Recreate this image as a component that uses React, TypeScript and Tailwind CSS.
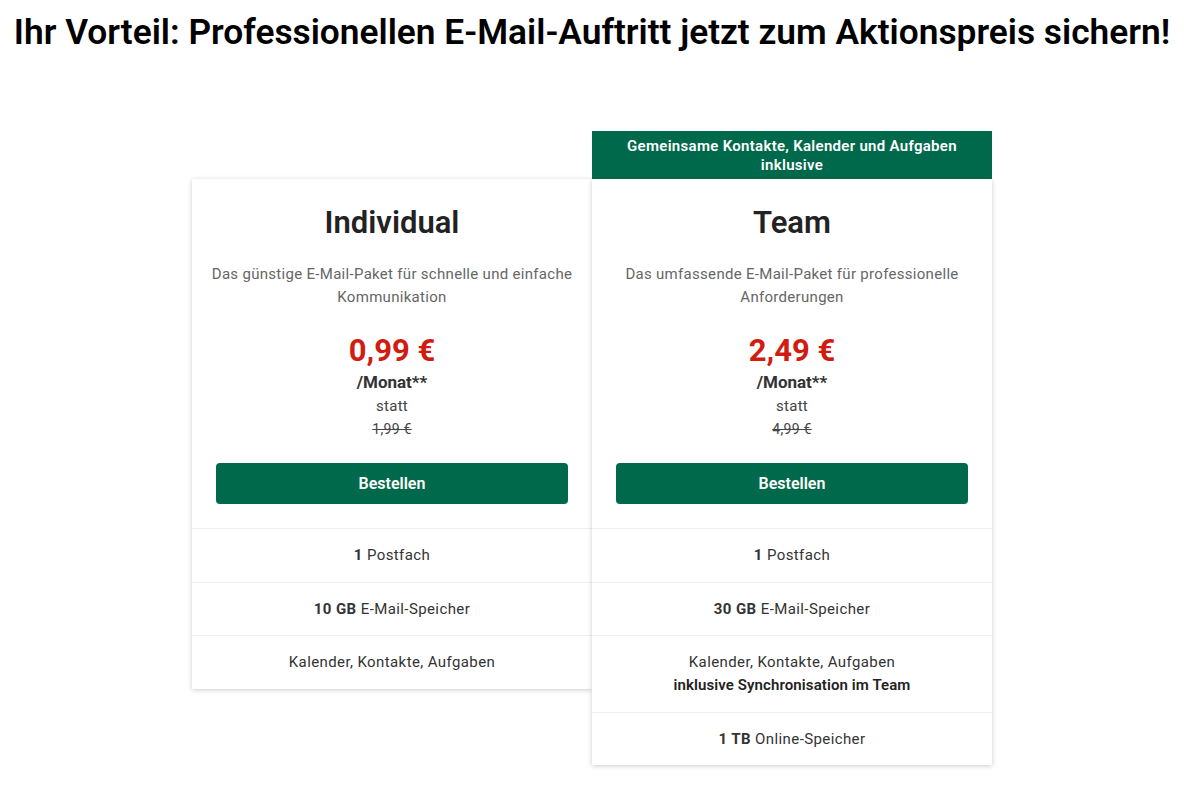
const plans = [
  {
    name: "Individual",
    banner: null as string | null,
    desc: "Das günstige E-Mail-Paket für schnelle und einfache Kommunikation",
    price: "0,99 €",
    old: "1,99 €",
    features: [
      { b: "1", t: "Postfach" },
      { b: "10 GB", t: "E-Mail-Speicher" },
      { b: "", t: "Kalender, Kontakte, Aufgaben" },
    ],
  },
  {
    name: "Team",
    banner: "Gemeinsame Kontakte, Kalender und Aufgaben inklusive",
    desc: "Das umfassende E-Mail-Paket für professionelle Anforderungen",
    price: "2,49 €",
    old: "4,99 €",
    features: [
      { b: "1", t: "Postfach" },
      { b: "30 GB", t: "E-Mail-Speicher" },
      { b: "", t: "Kalender, Kontakte, Aufgaben", extra: "inklusive Synchronisation im Team" },
      { b: "1 TB", t: "Online-Speicher" },
    ],
  },
];

const App = () => {
  return (
    <div className="min-h-screen bg-white font-['Roboto',sans-serif] text-[#222]">
      <h1 className="pt-[12px] text-center text-[35.3px] font-semibold leading-[40px] text-black">
        Ihr Vorteil: Professionellen E-Mail-Auftritt jetzt zum Aktionspreis sichern!
      </h1>

      <div className="mt-[79px] flex justify-center items-start">
        {plans.map((p) => (
          <div key={p.name} className="w-[400px] flex flex-col">
            {/* banner slot */}
            <div className="h-[48px]">
              {p.banner && (
                <div className="h-[48px] bg-[#00694b] px-6 pt-[6px] text-center text-[15px] font-semibold leading-[19px] tracking-[0.3px] text-white">
                  {p.banner}
                </div>
              )}
            </div>
            <div className="bg-white shadow-[0_1px_5px_rgba(0,0,0,0.2)]">
              <div className="px-6 pt-[25px] pb-6 text-center">
                <h2 className="text-[31px] font-semibold leading-[38px] text-[#222]">{p.name}</h2>
                <p className="-mx-[10px] mt-[21px] text-[15px] leading-[23px] tracking-[0.3px] text-[#666]">{p.desc}</p>
                <div className="mt-[24px] text-[31px] font-bold leading-[36px] text-[#cf1d12]">{p.price}</div>
                <div className="mt-[2px] text-[17px] font-bold leading-[22px] text-[#333]">/Monat**</div>
                <div className="mt-[2px] text-[15px] leading-[22px] tracking-[0.3px] text-[#444]">statt</div>
                <div className="text-[14px] leading-[24px] tracking-[0.3px] text-[#444] line-through">{p.old}</div>
                <button className="mt-[22px] h-[41px] w-full rounded-[4px] bg-[#00694b] text-[16px] font-semibold text-white">
                  Bestellen
                </button>
              </div>
              {p.features.map((f, i) => (
                <div
                  key={i}
                  className="border-t border-[#eeeeee] px-6 pt-[15px] pb-[14.5px] text-center text-[15px] leading-[23px] tracking-[0.4px] text-[#333]"
                >
                  {f.b && <span className="font-bold">{f.b} </span>}
                  {f.t}
                  {"extra" in f && f.extra && (
                    <div className="font-semibold tracking-[0.1px] text-[#222]">{f.extra}</div>
                  )}
                </div>
              ))}
            </div>
          </div>
        ))}
      </div>
    </div>
  );
};

export default App;
